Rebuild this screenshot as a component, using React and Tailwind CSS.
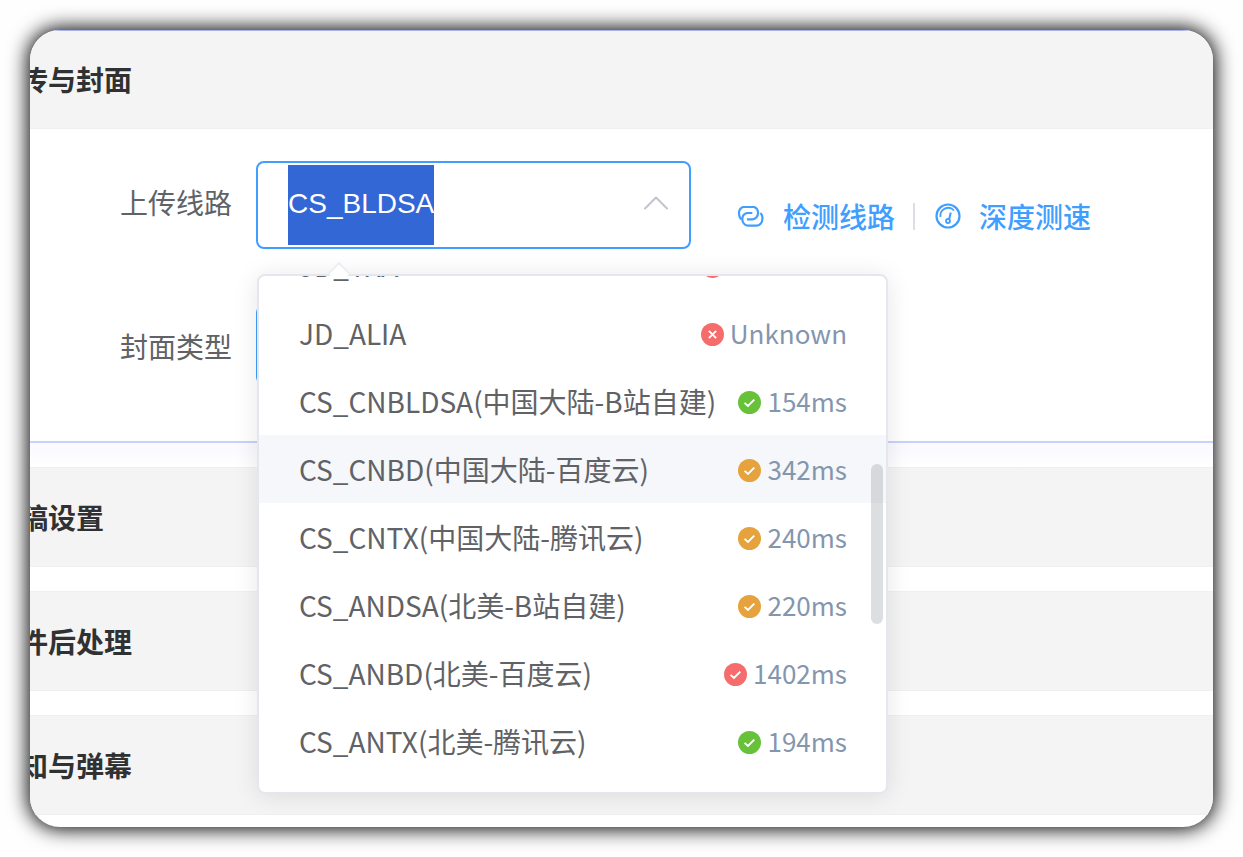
import React from "react";
import { ChevronUp } from "lucide-react";

const cjk = "font-['Noto_Sans_CJK_SC','Noto_Sans',sans-serif]";

const rows = [
  { name: "JD_TXA", status: "fail", time: "Unknown" },
  { name: "JD_ALIA", status: "fail", time: "Unknown" },
  { name: "CS_CNBLDSA(中国大陆-B站自建)", status: "good", time: "154ms" },
  { name: "CS_CNBD(中国大陆-百度云)", status: "warn", time: "342ms", hover: true },
  { name: "CS_CNTX(中国大陆-腾讯云)", status: "warn", time: "240ms" },
  { name: "CS_ANDSA(北美-B站自建)", status: "warn", time: "220ms" },
  { name: "CS_ANBD(北美-百度云)", status: "bad", time: "1402ms" },
  { name: "CS_ANTX(北美-腾讯云)", status: "good", time: "194ms" },
];

const StatusIcon = ({ status }) => {
  const colors = {
    fail: "text-[#f56c6c]",
    bad: "text-[#f56c6c]",
    good: "text-[#67c23a]",
    warn: "text-[#e6a23c]",
  };
  return (
    <svg viewBox="0 0 24 24" className={`w-[23px] h-[23px] mt-[2px] shrink-0 ${colors[status]}`}>
      <circle cx="12" cy="12" r="12" fill="currentColor" />
      {status === "fail" ? (
        <path d="M8.2 8.2l7.6 7.6M15.8 8.2l-7.6 7.6" stroke="#fff" strokeWidth="2" fill="none" />
      ) : (
        <path d="M6.8 12.4l3.6 3.2 6.6-6.6" stroke="#fff" strokeWidth="2" fill="none" />
      )}
    </svg>
  );
};

const SectionHeader = ({ title }) => (
  <div className="h-[100px] shrink-0 flex items-center bg-[#f4f4f4] border-y border-[#f0f0f0]">
    <h3 className={`-ml-[38px] text-[28px] font-bold text-[#303133] whitespace-nowrap ${cjk}`}>{title}</h3>
  </div>
);

const LinkIcon = () => (
  <svg viewBox="0 0 26 21" className="w-[26px] h-[21px] shrink-0" fill="none" stroke="currentColor" strokeWidth="2.2">
    <path d="M3.300 13.300C1.500 12 1 10 1 7.300A6.500 6.500 0 0 1 5 1H16A6.300 6.300 0 0 1 20 7.300A6 6 0 0 1 14.300 13.300H9" />
    <path d="M22.300 7A6.500 6.500 0 0 1 24.300 13.300A6.300 6.300 0 0 1 18.300 19.700H10A6.300 6.300 0 0 1 4.300 13.300A6.300 6.300 0 0 1 9 7H14.300" />
  </svg>
);

const GaugeIcon = () => (
  <svg viewBox="0 0 26 26" className="w-[26px] h-[26px] shrink-0" fill="none" stroke="currentColor" strokeWidth="2.200">
    <circle cx="13" cy="13" r="11.500" />
    <path d="M5.500 14a7.800 7.800 0 0 1 13.500-6.500" strokeWidth="1.800" />
    <path d="M15.800 9.500L14 16.500" strokeWidth="2" />
    <circle cx="13" cy="18" r="2" strokeWidth="1.800" />
  </svg>
);

export default function App() {
  return (
    <div className="w-[1243px] h-[857px] bg-[#fefefe] pt-[30px] pl-[30px]">
      <div className="relative w-[1183px] h-[797px] rounded-[30px] bg-white shadow-[0_0_20px_2px_#000]">
        <div className="h-full rounded-[30px] overflow-hidden flex flex-col">
          {/* first section */}
          <div className="h-[99px] shrink-0 flex items-center bg-[#f4f4f4] border-t border-t-[#aab2ea] border-b border-b-[#f0f0f0]">
            <h3 className={`-ml-[38px] -mt-0.5 text-[28px] font-bold text-[#303133] whitespace-nowrap ${cjk}`}>上传与封面</h3>
          </div>
          <div className="h-[312px] shrink-0 pt-8 pl-[90px] flex flex-col gap-[52px]">
            <div className="flex items-start">
              <label className={`w-[136px] h-[82px] flex items-center text-[28px] text-[#606266] ${cjk}`}>上传线路</label>
              <div className="relative w-[435px] h-[88px] rounded-lg border-2 border-[#409eff] pl-[30px] pr-[11px] flex items-center justify-between">
                <span className="h-[80px] pb-0.5 flex items-center bg-[#3367d6] text-white text-[28px] font-['Liberation_Sans',sans-serif]">CS_BLDSA</span>
                <ChevronUp className="w-11 h-11 -mt-1 text-[#c0c4cc]" strokeWidth={1.100} />
              </div>
              <div className={`ml-[47px] mt-[34px] flex items-center text-[#409eff] text-[28px] font-medium ${cjk}`}>
                <LinkIcon />
                <span className="ml-[19px]">检测线路</span>
                <span className="w-0.5 h-[27px] bg-[#dcdfe6] ml-[18px] mr-[20px]" />
                <GaugeIcon />
                <span className="ml-[18px]">深度测速</span>
              </div>
            </div>
            <div className="flex items-start">
              <label className={`w-[136px] h-[90px] flex items-center text-[28px] text-[#606266] ${cjk}`}>封面类型</label>
              <div className="w-[435px] h-20 mt-1 rounded-lg border-2 border-[#409eff]" />
            </div>
          </div>
          <div className="h-[2px] shrink-0 bg-[#c9d2f8]" />
          <div className="h-6 shrink-0 bg-gradient-to-b from-[#f9f9ff] to-white" />
          <SectionHeader title="投稿设置" />
          <div className="h-6 shrink-0" />
          <SectionHeader title="文件后处理" />
          <div className="h-6 shrink-0" />
          <SectionHeader title="通知与弹幕" />
        </div>

        {/* dropdown */}
        <div className="absolute left-[227px] top-[244px] w-[631px] h-[520px] rounded-lg border-2 border-[#e4e7ed] bg-white shadow-[0_2px_24px_rgba(0,0,0,0.1)]">
          <div className="absolute left-[72px] -top-[11px] w-4 h-4 rotate-45 bg-white border-l-2 border-t-2 border-[#ebeef5]" />
          <div className={`relative h-full overflow-hidden rounded-md ${cjk}`}>
            <ul className="-mt-[45px]">
              {rows.map((row) => (
                <li
                  key={row.name}
                  className={`h-[68px] pl-10 pr-[39px] flex items-center justify-between ${row.hover ? "bg-[#f5f7fa]" : ""}`}
                >
                  <span className="text-[28px] text-[#606266] whitespace-nowrap">{row.name}</span>
                  <span className="flex items-center gap-1.5 text-[26px] text-[#8496ae]">
                    <StatusIcon status={row.status} />
                    <span className="pb-[2px]">{row.time}</span>
                  </span>
                </li>
              ))}
            </ul>
            <div className="absolute right-[3px] top-[188px] w-3 h-[160px] rounded-md bg-[#909399]/30" />
          </div>
        </div>
      </div>
    </div>
  );
}
